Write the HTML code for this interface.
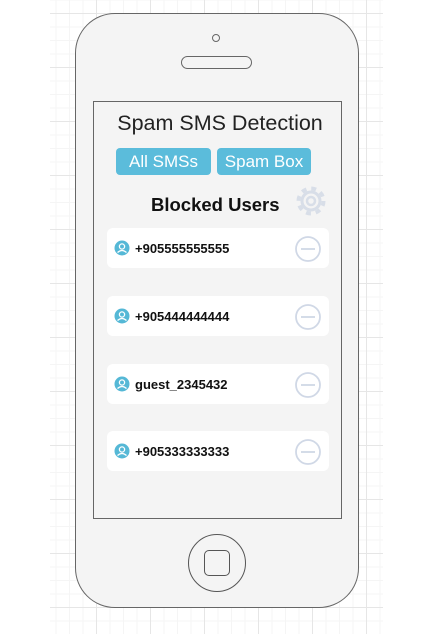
<!DOCTYPE html>
<html><head><style>
body{margin:0;width:432px;height:634px;background:#fff;position:relative;overflow:hidden;font-family:"Liberation Sans",Arial,sans-serif}
.grid{position:absolute;left:50px;top:0;width:333px;height:634px;
background-image:linear-gradient(#e6e6e6 1px,transparent 1px),linear-gradient(90deg,#e6e6e6 1px,transparent 1px),linear-gradient(#f5f5f5 1px,transparent 1px),linear-gradient(90deg,#f5f5f5 1px,transparent 1px);
background-size:54px 54px,54px 54px,13.5px 13.5px,13.5px 13.5px;background-position:-8px 13px,-8px 0,-8px 13px,-8px 0}
.phone{position:absolute;left:75px;top:13px;width:282px;height:593px;border:1.5px solid #666;border-radius:40px;background:#f4f4f4}
.screen{position:absolute;left:93px;top:101px;width:247px;height:416px;border:1.5px solid #666;background:#f4f4f4}
.abs{position:absolute}
.btn{position:absolute;top:148px;height:27px;background:#5bbcdb;color:#fff;font-size:17px;line-height:27px;text-align:center;border-radius:4px}
.row{position:absolute;left:107px;width:222px;height:40px;background:#fff;border-radius:6px}
.row span{position:absolute;left:28px;top:13px;font-size:13px;font-weight:bold;color:#111}
</style></head><body>
<div class="grid"></div>
<div class="phone"></div>
<div class="abs" style="left:212px;top:34px;width:8px;height:8px;border:1.5px solid #666;border-radius:50%;box-sizing:border-box"></div>
<div class="abs" style="left:181px;top:56px;width:71px;height:13px;border:1.5px solid #666;border-radius:7px;box-sizing:border-box"></div>
<div class="screen"></div>
<div class="abs" style="left:188px;top:534px;width:58px;height:58px;border:1.5px solid #555;border-radius:50%;box-sizing:border-box"></div>
<div class="abs" style="left:204px;top:550px;width:26px;height:26px;border:1.5px solid #555;border-radius:5px;box-sizing:border-box"></div>
<div class="abs" style="left:93px;top:111px;width:254px;text-align:center;font-size:21.5px;color:#222">Spam SMS Detection</div>
<div class="btn" style="left:116px;width:95px">All SMSs</div>
<div class="btn" style="left:217px;width:94px">Spam Box</div>
<div class="abs" style="left:151px;top:194px;font-size:18.5px;font-weight:bold;color:#111">Blocked Users</div>
<svg class="abs" style="left:295px;top:185px" width="32" height="32" viewBox="0 0 32 32"><g fill="none" stroke="#d8dee8"><circle cx="16" cy="16" r="12.5" stroke-width="4" stroke-dasharray="4.9 4.9"/><circle cx="16" cy="16" r="9" stroke-width="3"/><circle cx="16" cy="16" r="4" stroke-width="2.5"/></g></svg>
<div class="row" style="top:228px"><span>+905555555555</span></div>
<div class="row" style="top:296px"><span>+905444444444</span></div>
<div class="row" style="top:364px"><span>guest_2345432</span></div>
<div class="row" style="top:431px"><span>+905333333333</span></div>
<svg class="abs" style="left:0;top:0" width="432" height="634">
<g id="i"><circle cx="122" cy="248" r="7.5" fill="#55b8d6"/><circle cx="122" cy="246.5" r="2.6" fill="none" stroke="#fff" stroke-width="1.3"/><path d="M117.5 252.5q4.5-4 9 0" fill="none" stroke="#fff" stroke-width="1.3"/></g>
<use href="#i" y="68"/><use href="#i" y="136"/><use href="#i" y="203"/>
<g id="m" fill="none" stroke="#d0d8e6" stroke-width="1.8"><circle cx="308" cy="249" r="12"/><path d="M301 249h14"/></g>
<use href="#m" y="68"/><use href="#m" y="136"/><use href="#m" y="203"/>
</svg>
</body></html>
